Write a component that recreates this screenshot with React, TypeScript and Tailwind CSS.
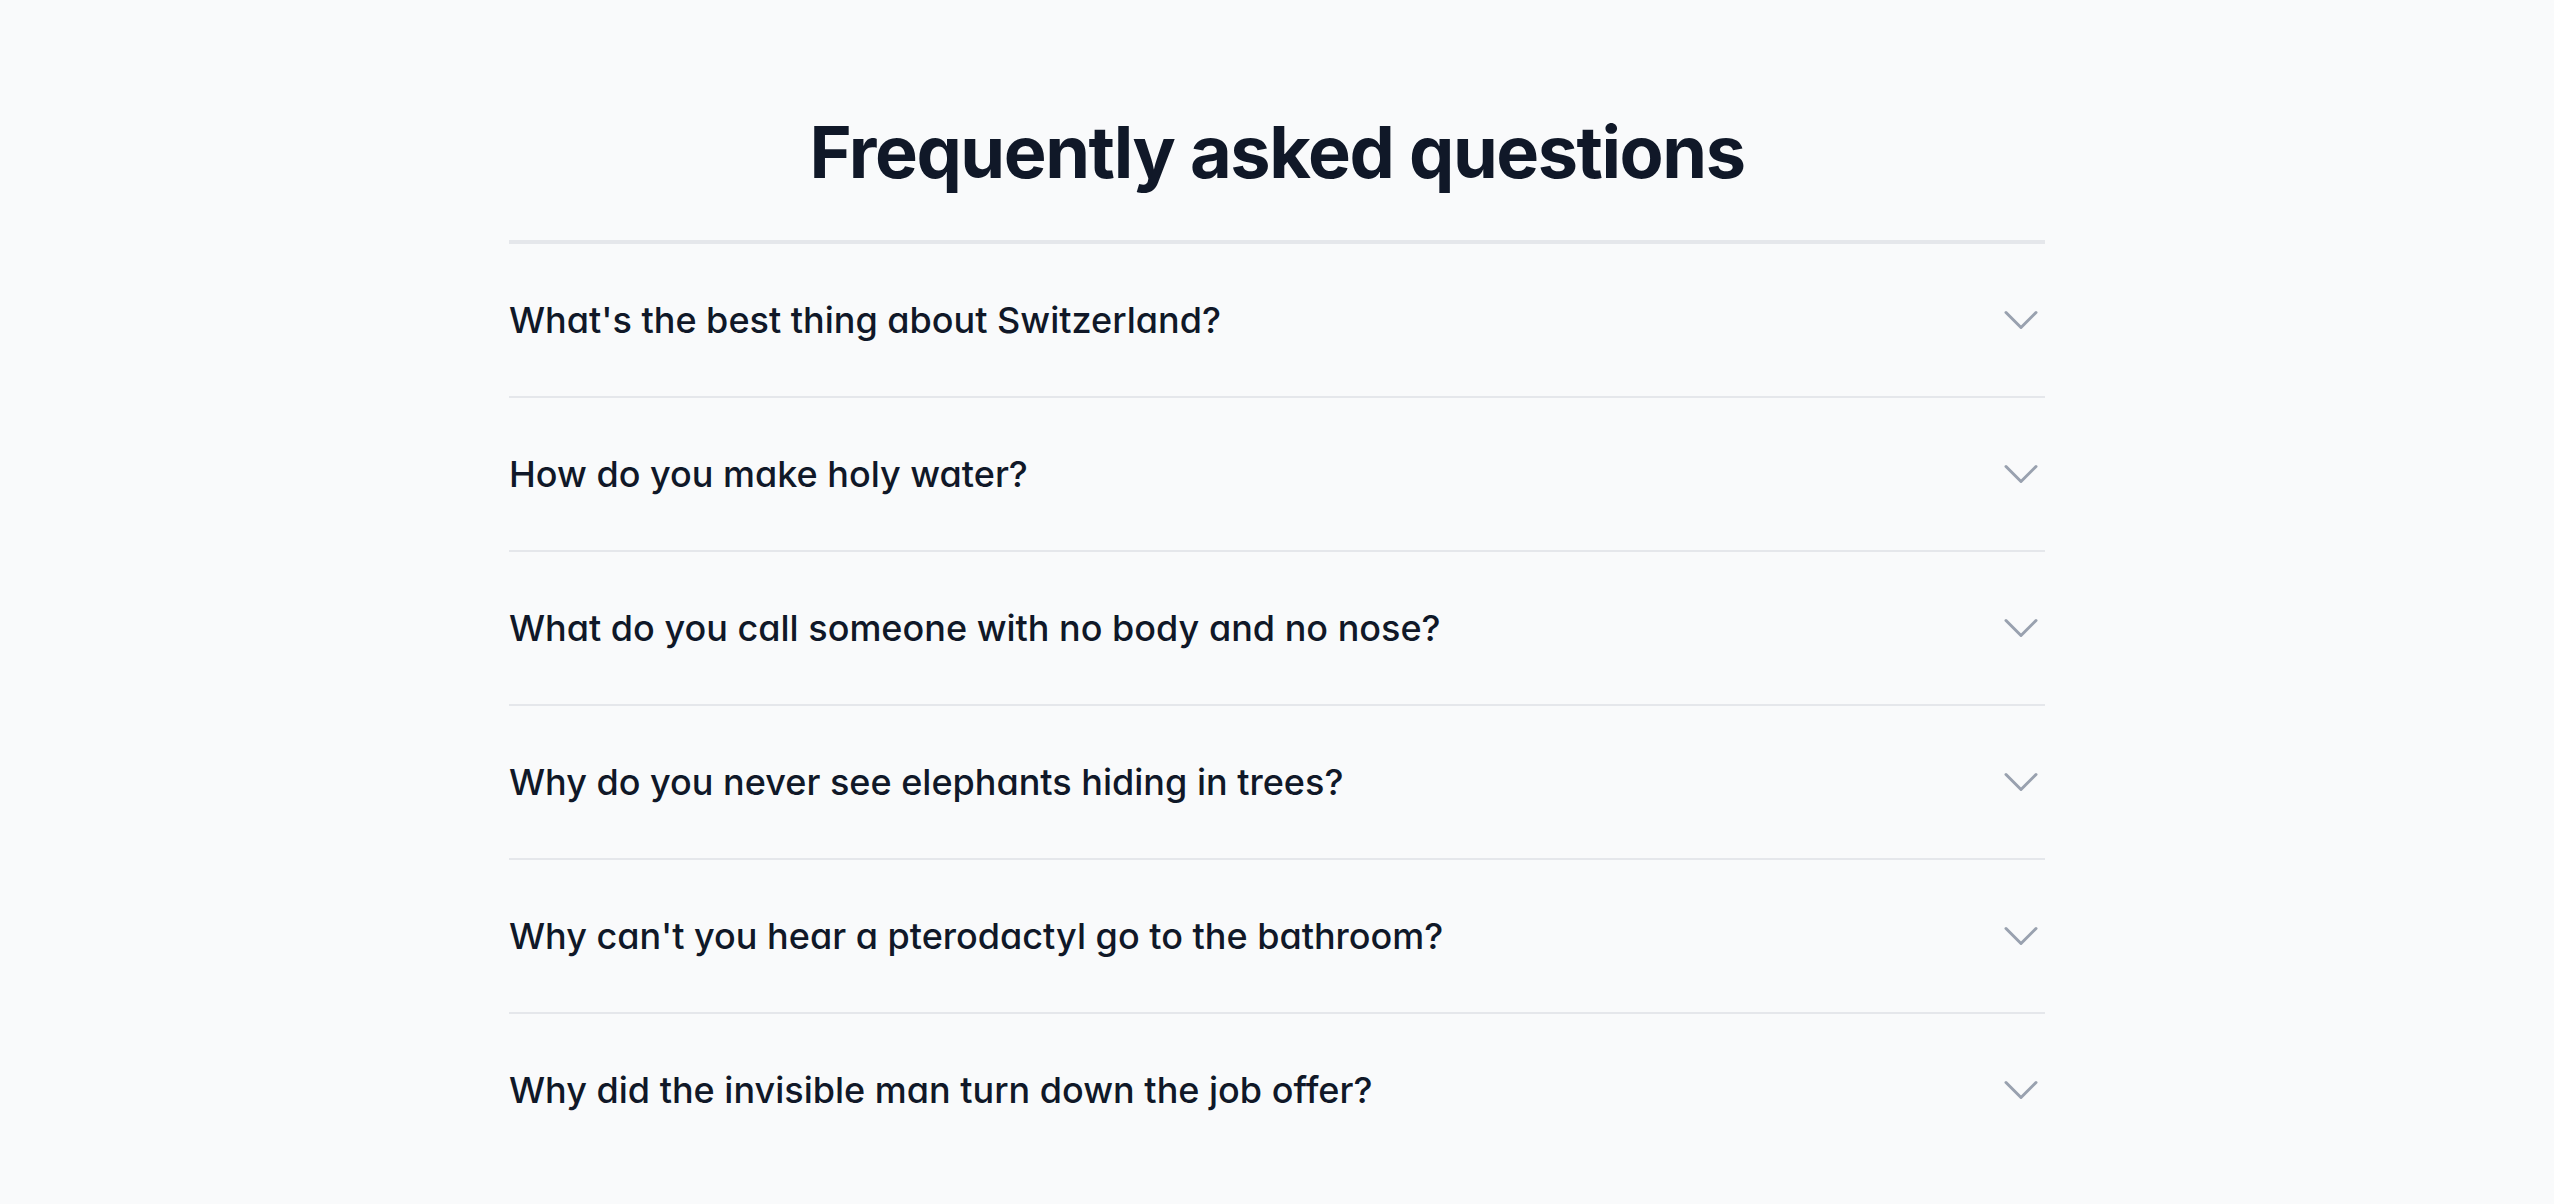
import React from "react";

const questions = [
  "What's the best thing about Switzerland?",
  "How do you make holy water?",
  "What do you call someone with no body and no nose?",
  "Why do you never see elephants hiding in trees?",
  "Why can't you hear a pterodactyl go to the bathroom?",
  "Why did the invisible man turn down the job offer?",
];

function Chevron() {
  return (
    <svg
      viewBox="0 0 24 24"
      fill="none"
      stroke="currentColor"
      strokeWidth={1.5}
      className="h-[48px] w-[48px] text-gray-400"
      aria-hidden="true"
    >
      <path strokeLinecap="round" strokeLinejoin="round" d="m19.5 8.25-7.5 7.5-7.5-7.5" />
    </svg>
  );
}

export default function App() {
  return (
    <div className="min-h-screen bg-gray-50 font-['Inter','Liberation_Sans',sans-serif]">
      <div className="mx-auto w-[1536px] pt-[112px]">
        <h2 className="text-center text-[72px] leading-[80px] font-bold tracking-[-0.02em] text-gray-900">
          Frequently asked questions
        </h2>
        <dl className="mt-[48px] border-t-4 border-gray-200">
          {questions.map((q, i) => (
            <div key={i} className={i === 0 ? "" : "border-t-2 border-gray-200"}>
              <dt>
                <button className="flex w-full items-center justify-between py-[48px] text-left text-gray-900">
                  <span className="text-[36px] leading-[56px] font-medium [font-feature-settings:'cv11']">
                    {q}
                  </span>
                  <span className="flex h-[56px] items-center">
                    <Chevron />
                  </span>
                </button>
              </dt>
            </div>
          ))}
        </dl>
      </div>
    </div>
  );
}
